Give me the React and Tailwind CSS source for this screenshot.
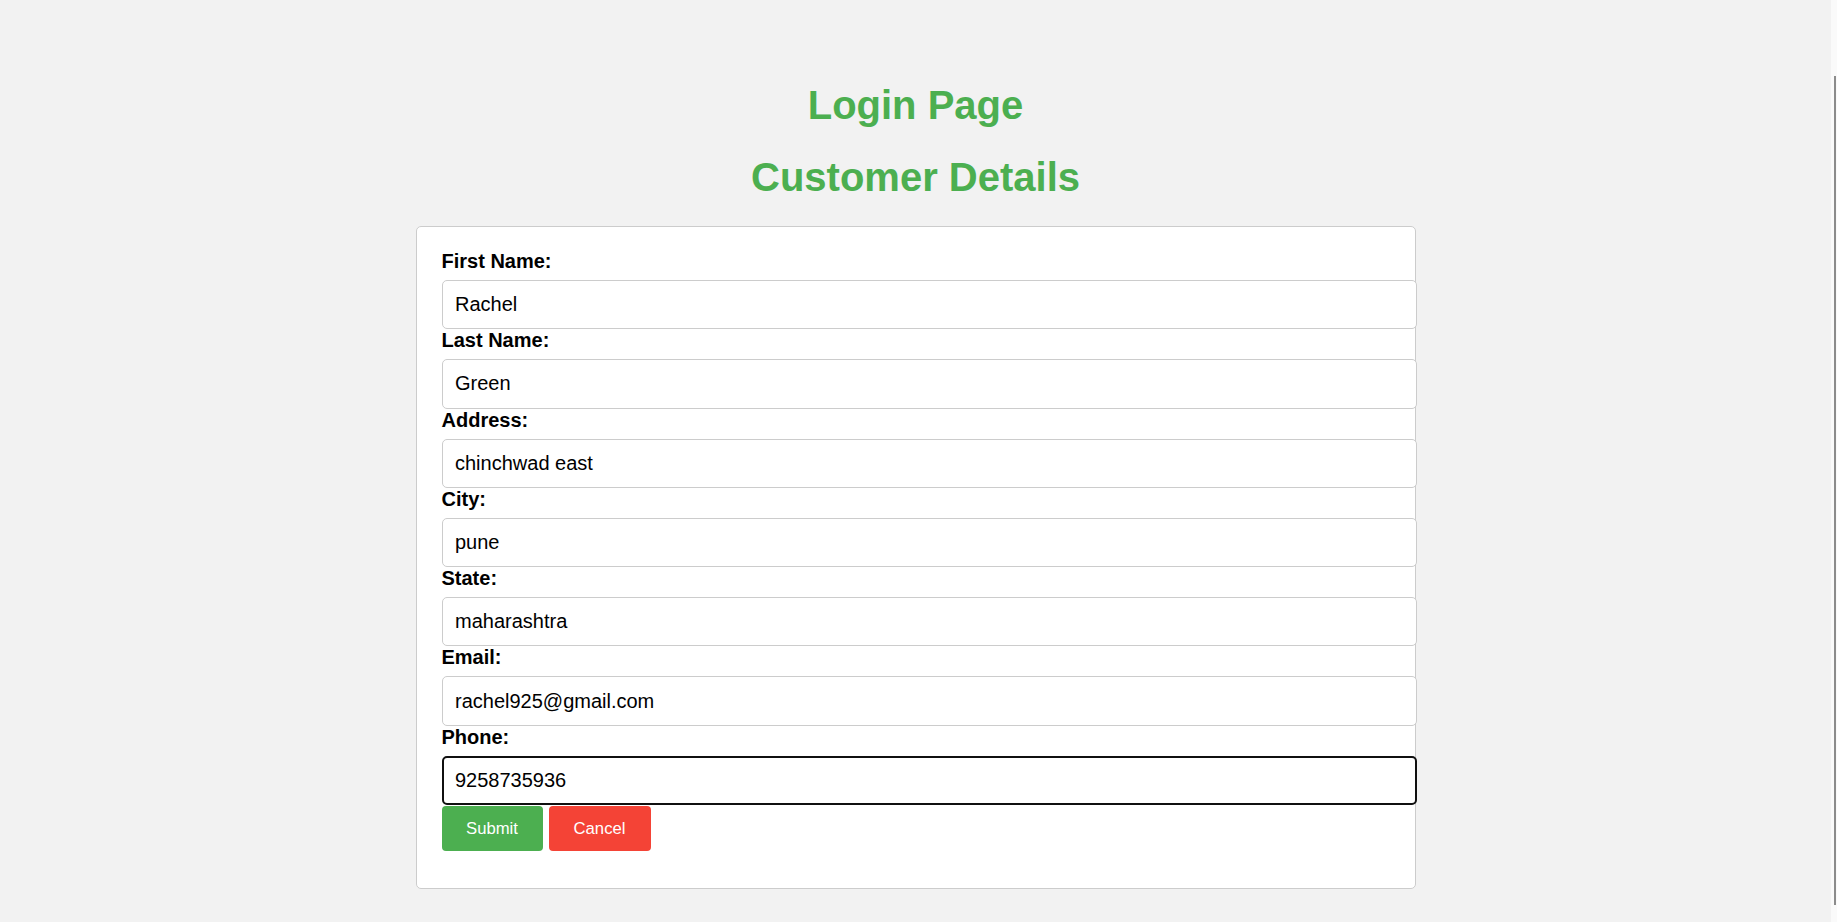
import React from "react";

const fields = [
  { label: "First Name:", value: "Rachel" },
  { label: "Last Name:", value: "Green" },
  { label: "Address:", value: "chinchwad east" },
  { label: "City:", value: "pune" },
  { label: "State:", value: "maharashtra" },
  { label: "Email:", value: "rachel925@gmail.com" },
  { label: "Phone:", value: "9258735936", focused: true },
];

export default function App() {
  return (
    <div className="flex h-[922px] overflow-hidden bg-[#f2f2f2] font-['Liberation_Sans',Arial,sans-serif] text-black">
      <main className="flex-1 pt-[81.5px]">
        <h1 className="text-center text-[40px] leading-[46px] font-bold text-[#4caf50] mb-[26.5px]">
          Login Page
        </h1>
        <h1 className="text-center text-[40px] leading-[46px] font-bold text-[#4caf50] mb-[26px]">
          Customer Details
        </h1>
        <form
          className="mx-auto w-[1000px] rounded-[5px] border border-[#cccccc] bg-white pl-[25px] pr-[25px] pt-[23px] pb-[37px]"
          onSubmit={(e) => e.preventDefault()}
        >
          {fields.map((f) => (
            <div key={f.label} className="flex flex-col">
              <label className="block text-[20px] leading-[23px] font-bold">{f.label}</label>
              <input
                readOnly
                value={f.value}
                className={
                  f.focused
                    ? "mt-[7px] box-border h-[49.3px] w-[975px] rounded-[5px] border-2 border-[#101010] bg-white px-[11.5px] text-[20px] text-black outline-none"
                    : "mt-[7px] box-border h-[49.3px] w-[975px] rounded-[5px] border border-[#cccccc] bg-white px-[12.5px] text-[20px] text-black outline-none"
                }
              />
            </div>
          ))}
          <div className="mt-[1px] flex gap-[6px]">
            <button
              type="submit"
              className="h-[45px] w-[101px] rounded-[4px] bg-[#4caf50] text-[16.7px] text-white"
            >
              Submit
            </button>
            <button
              type="button"
              className="h-[45px] w-[102px] rounded-[4px] bg-[#f44336] text-[16.7px] text-white"
            >
              Cancel
            </button>
          </div>
        </form>
      </main>
      <aside className="flex w-[6px] justify-end bg-[#fafafa] pt-[76px] pb-[17px]">
        <div className="mr-[1px] h-full w-[2px] bg-[#8c8c8c]" />
      </aside>
    </div>
  );
}
